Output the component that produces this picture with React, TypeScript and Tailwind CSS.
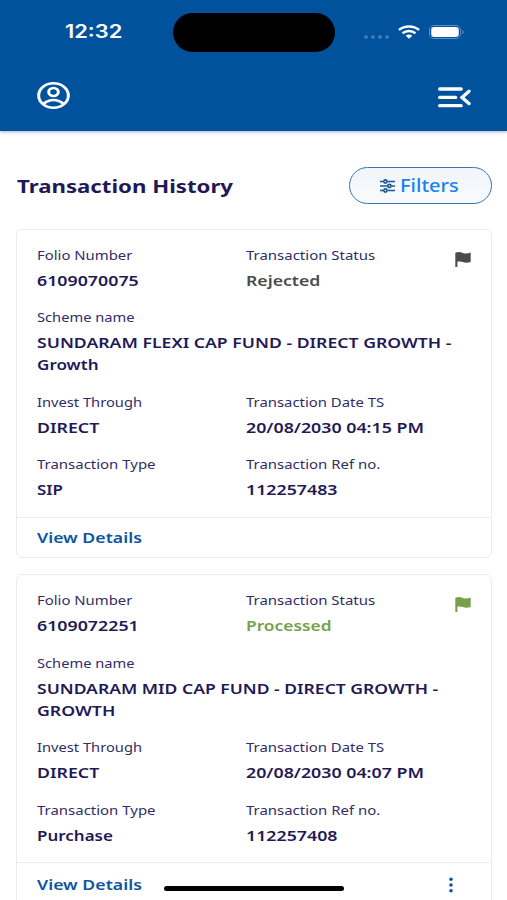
import { useLayoutEffect, useRef, useState } from "react";
import clsx from "clsx";

interface Transaction {
  folio: [string, number];
  status: [string, number];
  tone: string;
  scheme: [string, number][];
  date: [string, number];
  type: [string, number];
  refNo: [string, number];
  hasMenu: boolean;
}

const TRANSACTIONS: Transaction[] = [
  {
    folio: ["6109070075", 102],
    status: ["Rejected", 74],
    tone: "text-[#4b4b4b]",
    scheme: [["SUNDARAM FLEXI CAP FUND - DIRECT GROWTH -", 414.5], ["Growth", 62]],
    date: ["20/08/2030 04:15 PM", 178],
    type: ["SIP", 26],
    refNo: ["112257483", 92],
    hasMenu: false,
  },
  {
    folio: ["6109072251", 102],
    status: ["Processed", 85],
    tone: "text-[#76a04c]",
    scheme: [["SUNDARAM MID CAP FUND - DIRECT GROWTH -", 401], ["GROWTH", 78]],
    date: ["20/08/2030 04:07 PM", 178],
    type: ["Purchase", 76],
    refNo: ["112257408", 92],
    hasMenu: true,
  },
];

// Wide lettering: stretches a line of text to the given width
function Wide({ text, width, className }: { text: string; width: number; className?: string }) {
  const ref = useRef<HTMLSpanElement>(null);
  const [scale, setScale] = useState(1);

  useLayoutEffect(() => {
    if (ref.current) setScale(width / ref.current.offsetWidth);
  }, [text, width]);

  return (
    <span className={clsx("block", className)} style={{ width }}>
      <span ref={ref} className="inline-block origin-left whitespace-nowrap align-top" style={{ transform: `scaleX(${scale})` }}>
        {text}
      </span>
    </span>
  );
}

function Field({ label, labelWidth, lines, tone = "text-[#1f1a56]" }: {
  label: string;
  labelWidth: number;
  lines: [string, number][];
  tone?: string;
}) {
  return (
    <div>
      <Wide text={label} width={labelWidth} className="text-[13px] leading-5 font-normal text-[#322d66]" />
      <div className={clsx("mt-[5px] text-[14.3px] leading-[22.3px] font-semibold", tone)}>
        {lines.map(([text, width]) => (
          <Wide key={text} text={text} width={width} />
        ))}
      </div>
    </div>
  );
}

function FlagIcon({ className }: { className?: string }) {
  return (
    <svg viewBox="0 0 16 15" className={clsx("h-[15px] w-4", className)} fill="currentColor">
      <path d="M.8 0.6C3.2-.2 5.600-.1 7.700.9c2.200 1 4.600 1 8-.3v9.300c-2.900 1-5.500 1.100-7.800.2-2-.8-3.800-.9-5.500-.4V15H.3V1.300c0-.3.200-.6.500-.7Z" />
    </svg>
  );
}

function StatusBar() {
  return (
    <div className="flex h-16 items-center pl-[65px] pr-[42px] text-white">
      <Wide text="12:32" width={57} className="font-['Inter'] text-[18px] leading-6 font-semibold" />
      <div className="ml-[51px] h-[39px] w-[162px] rounded-[20px] bg-black" />
      <div className="ml-auto flex items-center">
        <div className="mt-[9px] mr-[9px] flex gap-[3px]">
          {[0, 1, 2, 3].map((i) => (
            <span key={i} className="size-[4px] rounded-full bg-[#4079b3]" />
          ))}
        </div>
        <svg viewBox="0 0 22 14" className="h-[14px] w-[22px]" fill="none" stroke="currentColor" strokeWidth="2.500">
          <path d="M.9 4.900C6.600.2 15.400.2 21.100 4.900" />
          <path d="M4.500 8.200c3.800-3 9.200-3 13 0" />
          <path d="M7.700 10.700c2-1.500 4.600-1.500 6.600 0L11 13.700Z" fill="currentColor" stroke="none" />
        </svg>
        <svg viewBox="0 0 36 14" className="ml-[9px] h-[14px] w-9" fill="none">
          <rect x=".5" y=".5" width="31" height="13" rx="4.500" stroke="#5b90c4" />
          <rect x="2.200" y="2" width="27.600" height="10" rx="3" fill="#fff" />
          <path d="M33.300 4.700c1.700.7 1.700 3.900 0 4.600Z" fill="#5b90c4" />
        </svg>
      </div>
    </div>
  );
}

function Header() {
  return (
    <header className="h-[131px] shrink-0 bg-[#00529c] shadow-[0_1px_3px_rgba(30,20,90,0.35)]">
      <StatusBar />
      <div className="flex h-[63px] items-center justify-between pl-[37px] pr-[36px] text-white">
        <button type="button" aria-label="Profile">
          <svg viewBox="0 0 24 24" preserveAspectRatio="none" className="h-[27px] w-[33px]" fill="none" stroke="currentColor" strokeWidth="2.200">
            <circle cx="12" cy="12" r="10.800" />
            <circle cx="12" cy="8.900" r="3.500" />
            <path d="M4.600 19.700c4.200-5 10.600-5 14.800 0" />
          </svg>
        </button>
        <button type="button" aria-label="Menu" className="mt-[4px]">
          <svg viewBox="0 0 33 21" className="h-[21px] w-[33px]" fill="none" stroke="currentColor" strokeWidth="3.300" strokeLinecap="round">
            <path d="M1.700 2h21.500M1.700 10.400h16M1.700 18.700h21.500" />
            <path d="M31 4.200l-7 6.200 7 6.200" />
          </svg>
        </button>
      </div>
    </header>
  );
}

function TransactionCard({ item }: { item: Transaction }) {
  return (
    <article className="rounded-md border border-[#ececf0] bg-white">
      <div className="grid grid-cols-[209px_1fr] gap-y-[15px] px-5 pt-[15.4px] pb-[15.6px]">
        <Field label="Folio Number" labelWidth={95} lines={[item.folio]} />
        <div className="flex justify-between">
          <Field label="Transaction Status" labelWidth={129} lines={[item.status]} tone={item.tone} />
          <FlagIcon className={clsx("mt-[7px]", item.tone)} />
        </div>
        <div className="col-span-2">
          <Field label="Scheme name" labelWidth={97} lines={item.scheme} />
        </div>
        <Field label="Invest Through" labelWidth={105} lines={[["DIRECT", 62]]} />
        <Field label="Transaction Date TS" labelWidth={138.5} lines={[item.date]} />
        <Field label="Transaction Type" labelWidth={118.5} lines={[item.type]} />
        <Field label="Transaction Ref no." labelWidth={134.5} lines={[item.refNo]} />
      </div>
      <div className={clsx("flex items-center justify-between border-t border-[#ececf0] pl-5 pr-[38px]", item.hasMenu ? "h-[45px]" : "h-[40px] pt-px")}>
        <button type="button" className="text-left">
          <Wide text="View Details" width={105} className="text-[14.3px] leading-[22px] font-semibold text-[#0d559f]" />
        </button>
        {item.hasMenu && (
          <svg viewBox="0 0 4 16" className="h-4 w-1" fill="#0d559f">
            <circle cx="2" cy="2.200" r="1.800" />
            <circle cx="2" cy="8" r="1.800" />
            <circle cx="2" cy="13.800" r="1.800" />
          </svg>
        )}
      </div>
    </article>
  );
}

export default function App() {
  return (
    <div className="relative flex h-[900px] w-[507px] flex-col overflow-hidden bg-white font-['Noto_Sans',sans-serif]">
      <Header />
      <main className="pl-4 pr-[15px]">
        <div className="mt-[36px] flex h-[37px] items-center justify-between">
          <h1 className="pl-px">
            <Wide text="Transaction History" width={216} className="text-[18.500px] leading-7 font-bold text-[#1f1a56]" />
          </h1>
          <button type="button" className="flex h-[37px] w-[143px] items-center rounded-[19px] border-[1.500px] border-[#3a73ae] bg-gradient-to-b from-[#f1f6fb] to-[#f8fafd] pl-[30px]">
            <svg viewBox="0 0 15 14" className="mt-px mr-[5px] h-[14px] w-[15px]" fill="none" stroke="#1d568d" strokeWidth="1.600">
              <path d="M0 2.500h3.500M7.300 2.500H15M0 7h7.500M11.300 7H15M0 11.500h3.500M7.300 11.500H15" />
              <circle cx="5.400" cy="2.500" r="1.600" />
              <circle cx="9.400" cy="7" r="1.600" />
              <circle cx="5.400" cy="11.500" r="1.600" />
            </svg>
            <Wide text="Filters" width={59} className="-mt-[2px] text-left text-[18px] leading-7 font-medium text-[#1a80f5]" />
          </button>
        </div>
        <div className="mt-[24.500px] flex flex-col gap-4">
          {TRANSACTIONS.map((item) => (
            <TransactionCard key={item.refNo[0]} item={item} />
          ))}
        </div>
      </main>
      {/* home indicator */}
      <div className="absolute top-[886px] left-[164px] h-[5px] w-[180px] rounded-full bg-black" />
    </div>
  );
}
